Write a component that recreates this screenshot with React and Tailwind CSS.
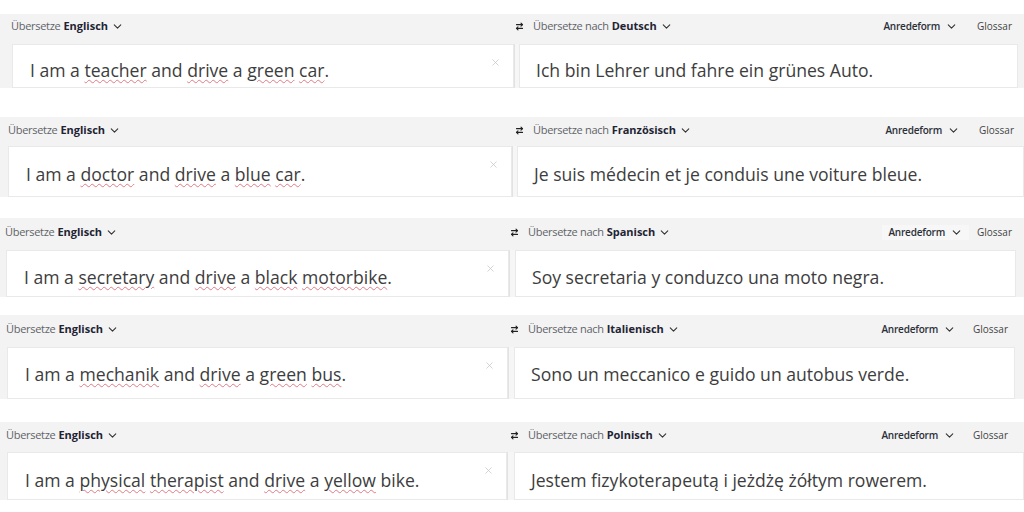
import React from "react";
import { ChevronDown, X, ArrowRightLeft } from "lucide-react";

const font = { fontFamily: '"Open Sans", "Noto Sans", "Liberation Sans", sans-serif' };

function Src({ parts }) {
  return (
    <>
      {parts.map((p, i) =>
        Array.isArray(p) ? (
          <span
            key={i}
            className="underline decoration-wavy decoration-[#e27a84] decoration-[1px] underline-offset-[2px]"
          >
            {p[0]}
          </span>
        ) : (
          <span key={i}>{p}</span>
        )
      )}
    </>
  );
}

function Strip({ s }) {
  return (
    <div className={s.wrap}>
      <div className={`flex items-center bg-[#f3f3f3] text-[11px] text-[#5f6368] ${s.headH}`}>
        <div className={`flex items-center ${s.leftW} ${s.hpl}`}>
          <span className="tracking-[-0.3px]">Übersetze</span>
          <span className="ml-[3px] font-bold text-[#1f2433]">Englisch</span>
          <ChevronDown size={13} strokeWidth={2} className="ml-[3px] text-[#333]" />
        </div>
        <div className={`flex flex-1 items-center ${s.swapPl}`}>
          <ArrowRightLeft size={9} strokeWidth={3} className="text-[#222]" />
          <span className="ml-[9px] tracking-[-0.3px]">Übersetze nach</span>
          <span className="ml-[3px] font-bold text-[#1f2433]">{s.target}</span>
          <ChevronDown size={13} strokeWidth={2} className="ml-[3px] text-[#333]" />
          <div className={`ml-auto flex h-full items-center ${s.anredeBox}`}>
            <span className="text-[10px] font-semibold tracking-[-0.2px] text-[#2b2f38]">Anredeform</span>
            <ChevronDown size={13} strokeWidth={2} className="ml-[5px] text-[#333]" />
          </div>
          <span className={`text-[10px] text-[#444] ${s.glossarMl}`}>Glossar</span>
          <div className={s.pr} />
        </div>
      </div>
      <div className={`flex bg-[#f3f3f3] ${s.boxH} ${s.boxPl}`}>
        <div className={`relative border border-[#e9e9e9] bg-white ${s.leftBoxW}`}>
          <div className={`pl-[17px] text-[17.6px] leading-6 text-[#3d3d3d] ${s.textPt}`}>
            <Src parts={s.src} />
          </div>
          <X size={11} strokeWidth={1.6} className="absolute right-[12px] top-[12px] text-[#c4c4c4]" />
        </div>
        <div className={`border-l border-[#e2e2e2] bg-[#f6f6f6] ${s.gapW}`} />
        <div className={`border border-[#e9e9e9] bg-white ${s.rightBoxW}`}>
          <div className={`pl-[16px] text-[17.6px] leading-6 text-[#3d3d3d] ${s.textPt}`}>{s.dst}</div>
        </div>
      </div>
    </div>
  );
}

const strips = [
  {
    wrap: "mt-[14px]",
    headH: "h-[30px] pb-[5px]",
    leftW: "w-[513px]",
    hpl: "pl-[11px]",
    swapPl: "pl-[2px]",
    target: "Deutsch",
    anredeBox: "",
    glossarMl: "ml-[19px]",
    pr: "w-[12px]",
    boxH: "h-[44px]",
    boxPl: "pl-[12px]",
    leftBoxW: "w-[502px]",
    gapW: "w-[5px]",
    rightBoxW: "w-[499px]",
    textPt: "pt-[13px]",
    src: ["I am a ", ["teacher"], " and ", ["drive"], " a ", ["green"], " ", ["car"], "."],
    dst: "Ich bin Lehrer und fahre ein grünes Auto.",
  },
  {
    wrap: "mt-[29px]",
    headH: "h-[29px] pb-[3px]",
    leftW: "w-[513px]",
    hpl: "pl-[8px]",
    swapPl: "pl-[2px]",
    target: "Französisch",
    anredeBox: "",
    glossarMl: "ml-[19px]",
    pr: "w-[10px]",
    boxH: "h-[51px]",
    boxPl: "pl-[8px]",
    leftBoxW: "w-[504px]",
    gapW: "w-[5px]",
    rightBoxW: "flex-1",
    textPt: "pt-[15px]",
    src: ["I am a ", ["doctor"], " and ", ["drive"], " a ", ["blue"], " ", ["car"], "."],
    dst: "Je suis médecin et je conduis une voiture bleue.",
  },
  {
    wrap: "mt-[21px]",
    headH: "h-[32px] pb-[4px]",
    leftW: "w-[508px]",
    hpl: "pl-[5px]",
    swapPl: "pl-[2px]",
    target: "Spanisch",
    anredeBox: "bg-[#f7f7f7] px-[6px]",
    glossarMl: "ml-[8px]",
    pr: "w-[12px]",
    boxH: "h-[47px]",
    boxPl: "pl-[6px]",
    leftBoxW: "w-[503px]",
    gapW: "w-[6px]",
    rightBoxW: "w-[501px]",
    textPt: "pt-[14px]",
    src: ["I am a ", ["secretary"], " and ", ["drive"], " a ", ["black"], " ", ["motorbike"], "."],
    dst: "Soy secretaria y conduzco una moto negra.",
  },
  {
    wrap: "mt-[18px]",
    headH: "h-[32px] pb-[4px]",
    leftW: "w-[508px]",
    hpl: "pl-[6px]",
    swapPl: "pl-[2px]",
    target: "Italienisch",
    anredeBox: "",
    glossarMl: "ml-[17px]",
    pr: "w-[16px]",
    boxH: "h-[52px]",
    boxPl: "pl-[7px]",
    leftBoxW: "w-[501px]",
    gapW: "w-[6px]",
    rightBoxW: "w-[501px]",
    textPt: "pt-[14px]",
    src: ["I am a ", ["mechanik"], " and ", ["drive"], " a ", ["green"], " ", ["bus"], "."],
    dst: "Sono un meccanico e guido un autobus verde.",
  },
  {
    wrap: "mt-[23px]",
    headH: "h-[30px] pb-[3px]",
    leftW: "w-[508px]",
    hpl: "pl-[6px]",
    swapPl: "pl-[2px]",
    target: "Polnisch",
    anredeBox: "",
    glossarMl: "ml-[17px]",
    pr: "w-[16px]",
    boxH: "h-[48px]",
    boxPl: "pl-[7px]",
    leftBoxW: "w-[500px]",
    gapW: "w-[7px]",
    rightBoxW: "flex-1",
    textPt: "pt-[15px]",
    src: ["I am a ", ["physical"], " ", ["therapist"], " and ", ["drive"], " a ", ["yellow"], " bike."],
    dst: "Jestem fizykoterapeutą i jeżdżę żółtym rowerem.",
  },
];

export default function App() {
  return (
    <div className="h-[512px] w-[1024px] overflow-hidden bg-white" style={font}>
      {strips.map((s, i) => (
        <Strip key={i} s={s} />
      ))}
    </div>
  );
}
